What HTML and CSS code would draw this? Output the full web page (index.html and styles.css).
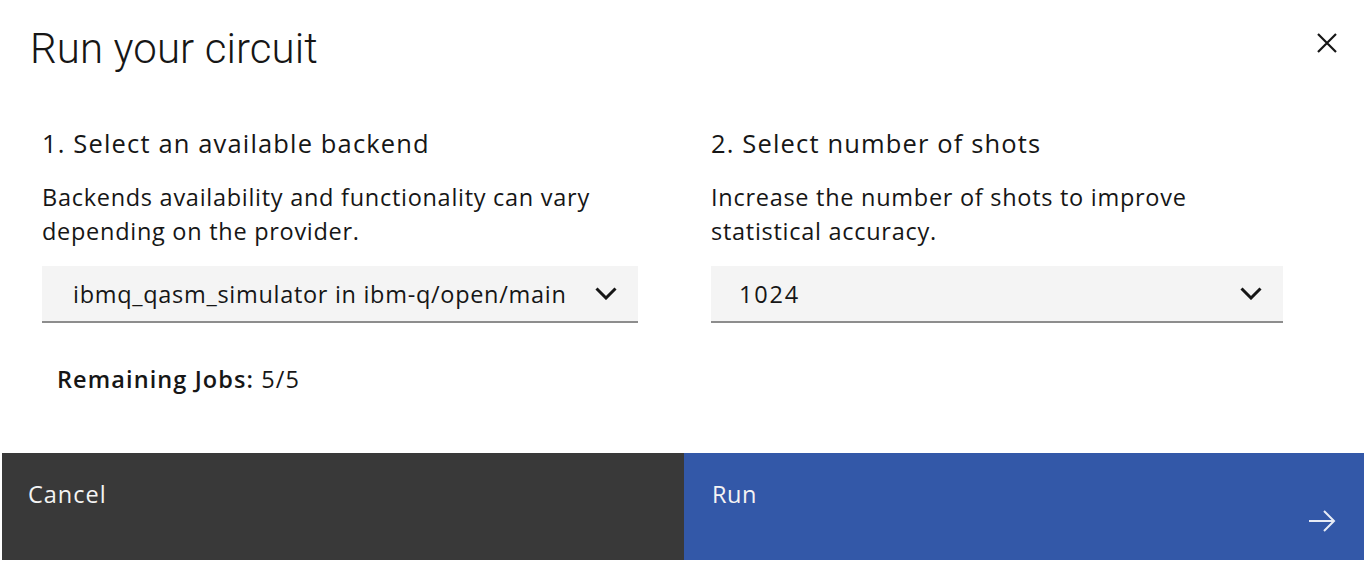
FILE: index.html
```html
<!DOCTYPE html>
<html lang="en">
<head>
<meta charset="utf-8">
<title>Run your circuit</title>
<link rel="stylesheet" href="styles.css">
</head>
<body>
<div class="modal">
  <div class="header">
    <h1 class="title">Run your circuit</h1>
    <button class="close" aria-label="Close">
      <svg width="20" height="20" viewBox="0 0 20 20"><path d="M1 1 L19 19 M19 1 L1 19" stroke="#161616" stroke-width="2.2" fill="none"/></svg>
    </button>
  </div>
  <div class="content">
    <div class="col">
      <h2 class="step">1. Select an available backend</h2>
      <p class="desc">Backends availability and functionality can vary depending on the provider.</p>
      <div class="select select-backend">
        <span class="value">ibmq_qasm_simulator in ibm-q/open/main</span>
        <svg class="chev" width="22" height="13" viewBox="0 0 22 13"><path d="M1.5 1.5 L11 11 L20.5 1.5" stroke="#161616" stroke-width="3" fill="none"/></svg>
      </div>
      <div class="jobs"><b>Remaining Jobs:</b> 5/5</div>
    </div>
    <div class="col">
      <h2 class="step">2. Select number of shots</h2>
      <p class="desc">Increase the number of shots to improve statistical accuracy.</p>
      <div class="select select-shots">
        <span class="value">1024</span>
        <svg class="chev" width="22" height="13" viewBox="0 0 22 13"><path d="M1.5 1.5 L11 11 L20.5 1.5" stroke="#161616" stroke-width="3" fill="none"/></svg>
      </div>
    </div>
  </div>
  <div class="footer">
    <button class="btn btn-cancel">Cancel</button>
    <button class="btn btn-run"><span>Run</span>
      <svg class="arrow" width="28" height="22" viewBox="0 0 28 22"><path d="M1 11 H26 M16 1 L26 11 L16 21" stroke="#e8ecf6" stroke-width="2" fill="none"/></svg>
    </button>
  </div>
</div>
</body>
</html>
```
FILE: styles.css
```css
* { box-sizing: border-box; }
body {
  margin: 0;
  background: #ffffff;
  color: #161616;
  font-family: "Open Sans", "Noto Sans", "Liberation Sans", sans-serif;
}
.modal {
  width: 1362px;
  margin-left: 2px;
}
.header {
  display: flex;
  justify-content: space-between;
  align-items: flex-start;
  padding: 24px 27px 0 28px;
}
.title {
  margin: 0;
  font-family: Roboto, "Open Sans", sans-serif;
  font-size: 42px;
  line-height: 50px;
  font-weight: 300;
  letter-spacing: 0.1px;
}
.close {
  margin-top: 9px;
  padding: 0;
  border: 0;
  background: none;
  width: 20px;
  height: 20px;
  display: flex;
}
.content {
  display: grid;
  grid-template-columns: 596px 572px;
  column-gap: 73px;
  padding-left: 40px;
  margin-top: 53px;
}
.step {
  margin: 0;
  font-size: 25.5px;
  line-height: 32px;
  font-weight: 400;
  letter-spacing: 1.15px;
}
.desc {
  margin: 21px 0 18px;
  font-size: 23.5px;
  line-height: 34px;
  letter-spacing: 0.72px;
}
.select {
  height: 57px;
  background: #f4f4f4;
  border-bottom: 2px solid #8d8d8d;
  display: flex;
  align-items: center;
  justify-content: space-between;
  padding: 0 21px 0 31px;
  font-size: 23.5px;
  letter-spacing: 0.7px;
}
.select-shots { padding-left: 28px; }
.select-shots .value { letter-spacing: 1.8px; }
.chev { display: block; }
.jobs {
  margin-top: 40px;
  padding-left: 15px;
  font-size: 23.5px;
  line-height: 33px;
  letter-spacing: 1.1px;
}
.jobs b { font-weight: 600; }
.footer {
  display: grid;
  grid-template-columns: 682px 680px;
  height: 107px;
  margin-top: 57px;
}
.btn {
  border: 0;
  margin: 0;
  font-family: inherit;
  font-size: 23.5px;
  line-height: 33px;
  letter-spacing: 0.6px;
  color: #f4f4f4;
  text-align: left;
  display: flex;
  align-items: flex-start;
  justify-content: space-between;
}
.btn-cancel {
  background: #393939;
  padding: 25px 26px 0 26px;
  letter-spacing: 1px;
}
.btn-run {
  background: #3358a8;
  padding: 25px 28px 28px 28px;
}
.arrow {
  align-self: flex-end;
  display: block;
}
```
